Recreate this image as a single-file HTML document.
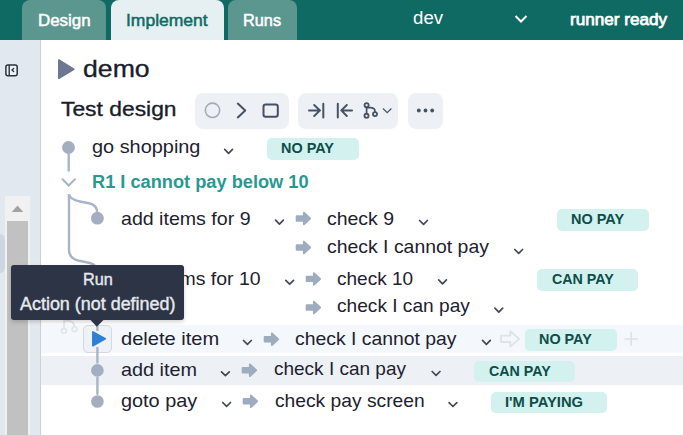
<!DOCTYPE html>
<html><head><meta charset="utf-8">
<style>
html,body{margin:0;padding:0;}
body{width:683px;height:435px;overflow:hidden;position:relative;background:#fff;font-family:"Liberation Sans",sans-serif;color:#1d2130;}
.a{position:absolute;white-space:pre;line-height:1;transform-origin:0 0;}
.hdr{position:absolute;left:0;top:0;width:683px;height:40px;background:#0f6a63;}
.tab{position:absolute;top:0;height:40px;border-radius:8px 8px 0 0;background:#5b978f;}
.b{font-weight:bold;}
.side{position:absolute;left:0;top:40px;width:40px;height:395px;background:#e2e8f0;border-right:1px solid #cfd0d2;}
.badge{position:absolute;height:22px;border-radius:5px;background:#d2f1ef;}
.bt{font-weight:bold;font-size:14.3px;color:#0e4d48;}
.tx{font-size:19.4px;}
svg{position:absolute;overflow:visible;}
</style></head><body>
<div class="hdr"></div>
<div class="tab" style="left:22px;width:84px;"></div>
<div class="tab" style="left:111px;width:113px;background:#e6eff1;"></div>
<div class="tab" style="left:228px;width:69px;"></div>
<div class="a" style="left:37.69px;top:13.18px;font-size:16.8px;-webkit-text-stroke:0.5px #ffffff;color:#ffffff;transform:scaleX(1.0078);">Design</div>
<div class="a" style="left:125.56px;top:12.68px;font-size:16.8px;-webkit-text-stroke:0.5px #0f6b64;color:#0f6b64;transform:scaleX(1.0427);">Implement</div>
<div class="a" style="left:243.23px;top:12.88px;font-size:16.8px;-webkit-text-stroke:0.5px #ffffff;color:#ffffff;transform:scaleX(0.9713);">Runs</div>
<div class="a" style="left:412.70px;top:9.29px;font-size:18.8px;color:#ffffff;transform:scaleX(0.9938);">dev</div>
<div class="a" style="left:569.76px;top:11.12px;font-size:16.4px;-webkit-text-stroke:0.75px #ffffff;color:#ffffff;transform:scaleX(1.0449);">runner ready</div>
<svg style="left:0;top:0" width="683" height="40"><path d="M515.5 16 L521 21.5 L526.5 16" fill="none" stroke="#fff" stroke-width="2"/></svg>

<div class="side"></div>
<svg style="left:0;top:0" width="60" height="100"><rect x="5.9" y="65.1" width="11.3" height="10.6" rx="2" fill="#eef2f6" stroke="#2b323d" stroke-width="1.5"/><line x1="9.2" y1="65.1" x2="9.2" y2="75.7" stroke="#2b323d" stroke-width="1.4"/><path d="M13.7 68.5 L11.9 70 L13.7 71.5" fill="none" stroke="#2b323d" stroke-width="1.3" stroke-linecap="round" stroke-linejoin="round"/></svg>
<div style="position:absolute;left:-6px;top:234px;width:11px;height:39px;border-radius:6px;background:#cdd6e1;"></div>
<div style="position:absolute;left:5px;top:196px;width:25px;height:239px;background:#f1f1f1;"></div>
<div style="position:absolute;left:7px;top:221px;width:21px;height:214px;background:#c1c1c1;"></div>
<svg style="left:0;top:0" width="40" height="220"><path d="M11.7 212 L17.5 205.5 L23.3 212 Z" fill="#a3a3a3"/></svg>

<!-- demo heading -->
<svg style="left:0;top:0" width="100" height="100"><path d="M58.8 60 L73.8 69.2 L58.8 78.4 Z" fill="#6b7890" stroke="#6b7890" stroke-width="1.6" stroke-linejoin="round"/></svg>
<div class="a" style="left:82.90px;top:57.03px;font-size:24.3px;-webkit-text-stroke:0.35px #1a1d2b;color:#1a1d2b;transform:scaleX(1.0968);">demo</div>
<div class="a" style="left:60.60px;top:97.62px;font-size:21.0px;-webkit-text-stroke:0.35px #1a1d2b;color:#1a1d2b;transform:scaleX(1.0876);">Test design</div>

<!-- toolbar -->
<div style="position:absolute;left:195px;top:92.8px;width:94px;height:36px;border-radius:8px;background:#edf1f5;"></div>
<div style="position:absolute;left:298px;top:92.8px;width:100px;height:36px;border-radius:8px;background:#edf1f5;"></div>
<div style="position:absolute;left:408.2px;top:92.8px;width:35.3px;height:36px;border-radius:8px;background:#edf1f5;"></div>
<svg style="left:0;top:0" width="683" height="140">
 <circle cx="212.5" cy="110.3" r="7.2" fill="none" stroke="#a6aab6" stroke-width="1.6"/>
 <path d="M237.8 103.6 L245.2 110.5 L237.8 117.4" fill="none" stroke="#445064" stroke-width="2" stroke-linecap="round" stroke-linejoin="round"/>
 <rect x="263.5" y="104.5" width="14.3" height="12.3" rx="2.2" fill="none" stroke="#445064" stroke-width="2"/>
 <g fill="none" stroke="#465366" stroke-width="2" stroke-linecap="round" stroke-linejoin="round">
  <path d="M309 110.4 H320 M314.2 105 L320 110.4 L314.2 116"/><path d="M323.3 103.8 V117.5"/>
  <path d="M337.8 103.8 V117.5"/><path d="M352 110.4 H341.5 M346.8 105 L341.3 110.4 L346.8 116"/>
  <circle cx="366.6" cy="105.2" r="2.05" stroke-width="1.8"/><circle cx="366.5" cy="115.8" r="2.05" stroke-width="1.8"/><circle cx="375" cy="114.1" r="2.05" stroke-width="1.8"/>
  <path d="M366.6 108.1 V112.9 M367.4 107.6 H370 Q375 107.8 375 111.2" stroke-width="1.7"/>
 </g>
 <path d="M383 108.5 L387.2 112.7 L391.4 108.5" fill="none" stroke="#465366" stroke-width="1.2"/>
 <circle cx="418.8" cy="110.5" r="1.9" fill="#465366"/><circle cx="425.5" cy="110.5" r="1.9" fill="#465366"/><circle cx="432.2" cy="110.5" r="1.9" fill="#465366"/>
</svg>

<!-- row highlights -->
<div style="position:absolute;left:41px;top:325px;width:642px;height:27.8px;background:#f4f7fb;"></div>
<div style="position:absolute;left:41px;top:355.9px;width:642px;height:29px;background:#edf1f5;"></div>

<!-- tree lines -->
<svg style="left:0;top:0" width="683" height="435">
 <g fill="#a3afc1">
  <circle cx="68.5" cy="147.5" r="6.4"/>
  <circle cx="97.4" cy="218.2" r="6.4"/>
  <circle cx="97.4" cy="370.4" r="6.3"/>
  <circle cx="97.4" cy="401.5" r="6.3"/>
 </g>
 <g fill="none" stroke="#a9b5c6" stroke-width="2.4" stroke-linecap="round">
  <path d="M68.7 154.5 V170.5"/>
  <path d="M62.5 179.3 L68.7 185.5 L74.9 179.3" stroke-width="2.1"/>
  <path d="M69 194.2 V250 Q69 258 78 260.5 L90 263 Q97 265 97 272" stroke-linecap="butt"/>
  <path d="M69 194.2 Q69.5 199.5 80 201.5 L90 203.5 Q97 205.5 97 212" stroke-linecap="butt"/>
  <path d="M97.4 318 V362.6 M97.4 377.6 V393.8"/>
 </g>
 <g fill="none" stroke="#e1e5eb" stroke-width="1.6">
  <circle cx="64" cy="330.8" r="2.4"/><circle cx="74.4" cy="329.2" r="2.4"/>
  <path d="M64 328.4 V320 M64 322 Q66 320 70 321 Q74.4 322.5 74.4 326.8"/>
 </g>
</svg>

<!-- rows text -->
<div class="badge" style="left:267px;top:138px;width:92px;"></div>

<div class="badge" style="left:557px;top:209px;width:92px;"></div>

<div class="badge" style="left:537px;top:269px;width:101px;"></div>

<div class="badge" style="left:525px;top:329px;width:91.5px;height:22px;"></div>

<div class="badge" style="left:474px;top:361px;width:101px;height:21px;"></div>

<div class="badge" style="left:491px;top:392.3px;width:116px;height:20.5px;"></div>
<div class="a" style="left:92.30px;top:138.92px;font-size:17.7px;color:#1d2130;transform:scaleX(1.1251);">go shopping</div>
<div class="a" style="left:92.40px;top:173.31px;font-size:18.3px;font-weight:bold;color:#2a9890;transform:scaleX(0.9961);">R1 I cannot pay below 10</div>
<div class="a" style="left:281.00px;top:141.00px;font-size:14.3px;font-weight:bold;color:#0e4d48;transform:scaleX(1.0094);">NO PAY</div>
<div class="a" style="left:120.80px;top:210.82px;font-size:17.7px;color:#1d2130;transform:scaleX(1.1072);">add items for 9</div>
<div class="a" style="left:327.00px;top:210.82px;font-size:17.7px;color:#1d2130;transform:scaleX(1.0995);">check 9</div>
<div class="a" style="left:327.00px;top:239.12px;font-size:17.7px;color:#1d2130;transform:scaleX(1.0979);">check I cannot pay</div>
<div class="a" style="left:570.50px;top:211.80px;font-size:14.3px;font-weight:bold;color:#0e4d48;transform:scaleX(1.0132);">NO PAY</div>
<div class="a" style="left:120.80px;top:271.02px;font-size:17.7px;color:#1d2130;transform:scaleX(1.1009);">add items for 10</div>
<div class="a" style="left:336.70px;top:271.02px;font-size:17.7px;color:#1d2130;transform:scaleX(1.0753);">check 10</div>
<div class="a" style="left:336.70px;top:298.12px;font-size:17.7px;color:#1d2130;transform:scaleX(1.0808);">check I can pay</div>
<div class="a" style="left:551.70px;top:271.90px;font-size:14.3px;font-weight:bold;color:#0e4d48;transform:scaleX(0.9979);">CAN PAY</div>
<div class="a" style="left:120.80px;top:331.22px;font-size:17.7px;color:#1d2130;transform:scaleX(1.1354);">delete item</div>
<div class="a" style="left:295.20px;top:331.02px;font-size:17.7px;color:#1d2130;transform:scaleX(1.0952);">check I cannot pay</div>
<div class="a" style="left:538.80px;top:332.00px;font-size:14.3px;font-weight:bold;color:#0e4d48;transform:scaleX(1.0056);">NO PAY</div>
<div class="a" style="left:120.80px;top:361.62px;font-size:17.7px;color:#1d2130;transform:scaleX(1.1206);">add item</div>
<div class="a" style="left:273.80px;top:361.42px;font-size:17.7px;color:#1d2130;transform:scaleX(1.0735);">check I can pay</div>
<div class="a" style="left:488.70px;top:363.80px;font-size:14.3px;font-weight:bold;color:#0e4d48;transform:scaleX(0.9947);">CAN PAY</div>
<div class="a" style="left:120.80px;top:392.92px;font-size:17.7px;color:#1d2130;transform:scaleX(1.1233);">goto pay</div>
<div class="a" style="left:274.80px;top:392.72px;font-size:17.7px;color:#1d2130;transform:scaleX(1.0870);">check pay screen</div>
<div class="a" style="left:505.20px;top:395.00px;font-size:14.3px;font-weight:bold;color:#0e4d48;transform:scaleX(1.0308);">I'M PAYING</div>

<!-- chevrons & arrows -->
<svg style="left:0;top:0" width="683" height="435">
 <g fill="none" stroke="#3f4a5c" stroke-width="1.7" stroke-linecap="round" stroke-linejoin="round">
  <path d="M224.70 149.40 L228.60 153.30 L232.50 149.40"/>
  <path d="M275.55 220.20 L279.45 224.10 L283.35 220.20"/>
  <path d="M419.60 220.50 L423.50 224.40 L427.40 220.50"/>
  <path d="M514.80 249.50 L518.70 253.40 L522.60 249.50"/>
  <path d="M285.75 280.30 L289.65 284.20 L293.55 280.30"/>
  <path d="M438.65 279.90 L442.55 283.80 L446.45 279.90"/>
  <path d="M494.90 308.20 L498.80 312.10 L502.70 308.20"/>
  <path d="M243.50 340.50 L247.40 344.40 L251.30 340.50"/>
  <path d="M482.50 340.40 L486.40 344.30 L490.30 340.40"/>
  <path d="M221.50 371.80 L225.40 375.70 L229.30 371.80"/>
  <path d="M432.15 371.50 L436.05 375.40 L439.95 371.50"/>
  <path d="M222.70 402.50 L226.60 406.40 L230.50 402.50"/>
  <path d="M449.05 402.60 L452.95 406.50 L456.85 402.60"/>
 </g>
 <defs><path id="arr" d="M0.7 4.1 H7.9 V0.6 L14.1 6.3 L7.9 12 V8.5 H0.7 Z" stroke="#9eacbf" stroke-width="2" stroke-linejoin="round"/></defs>
 <g fill="#9eacbf">
  <use href="#arr" x="296" y="212.2"/>
  <use href="#arr" x="296" y="241.2"/>
  <use href="#arr" x="306" y="272.6"/>
  <use href="#arr" x="306" y="301.2"/>
  <use href="#arr" x="264" y="333"/>
  <use href="#arr" x="242" y="364"/>
  <use href="#arr" x="243" y="395"/>
 </g>
 <path d="M501 335.7 H510.3 V331.2 L519.1 338.9 L510.3 346.6 V342 H501 Z" fill="none" stroke="#dfe3e9" stroke-width="1.8" stroke-linejoin="round"/>
 <path d="M631.2 332.3 V345.8 M624.5 339 H637.9" stroke="#dde2e8" stroke-width="1.6"/>
</svg>

<!-- play button -->
<div style="position:absolute;left:83px;top:325px;width:27px;height:25.8px;border:1px solid #d3d9e1;border-radius:5px;background:#eef2f6;"></div>
<svg style="left:0;top:0" width="683" height="435">
 <path d="M97.4 326 V331 M97.4 347 V353" stroke="#a9b5c6" stroke-width="2.4"/>
 <path d="M92.9 331.9 L105.2 338.8 L92.9 345.7 Z" fill="#2f80d2" stroke="#2f80d2" stroke-width="1.7" stroke-linejoin="round"/>
</svg>

<!-- tooltip -->
<div style="position:absolute;left:11px;top:265px;width:173px;height:54.5px;border-radius:3px;background:#2c3446;box-shadow:0 2px 4px rgba(0,0,0,0.18);"></div>
<svg style="left:0;top:0" width="683" height="435"><path d="M89.6 319 L96.8 326.7 L104.4 319 Z" fill="#2c3446"/></svg>
<div class="a" style="left:82.51px;top:270.83px;font-size:16.5px;-webkit-text-stroke:0.4px #e6e8ec;color:#e6e8ec;transform:scaleX(0.9865);">Run</div>
<div class="a" style="left:19.50px;top:295.79px;font-size:17.5px;-webkit-text-stroke:0.4px #e6e8ec;color:#e6e8ec;transform:scaleX(1.0243);">Action (not defined)</div>
</body></html>
